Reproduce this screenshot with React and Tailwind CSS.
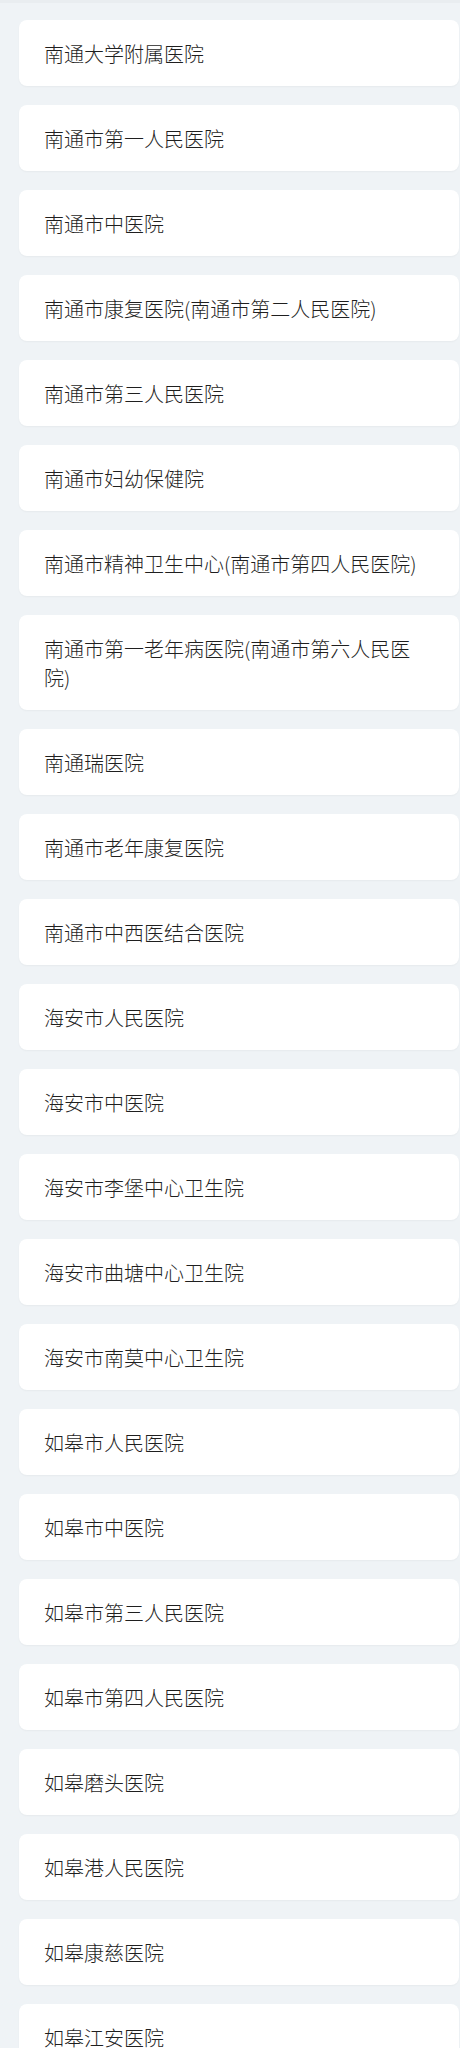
const items = [
  "南通大学附属医院",
  "南通市第一人民医院",
  "南通市中医院",
  "南通市康复医院(南通市第二人民医院)",
  "南通市第三人民医院",
  "南通市妇幼保健院",
  "南通市精神卫生中心(南通市第四人民医院)",
  "南通市第一老年病医院(南通市第六人民医院)",
  "南通瑞医院",
  "南通市老年康复医院",
  "南通市中西医结合医院",
  "海安市人民医院",
  "海安市中医院",
  "海安市李堡中心卫生院",
  "海安市曲塘中心卫生院",
  "海安市南莫中心卫生院",
  "如皋市人民医院",
  "如皋市中医院",
  "如皋市第三人民医院",
  "如皋市第四人民医院",
  "如皋磨头医院",
  "如皋港人民医院",
  "如皋康慈医院",
  "如皋江安医院",
];

export default function App() {
  return (
    <div
      className="min-h-[2048px] bg-[#eff3f6] border-t-[3px] border-[#e9edf0] pt-[17px] pl-[19px] pr-[1px]"
      style={{ fontFamily: '"Noto Sans CJK SC", "Noto Sans", sans-serif' }}
    >
      <div className="flex flex-col gap-[19px]">
        {items.map((t) => (
          <div
            key={t}
            className="bg-white rounded-[8px] shadow-[0_1px_2px_rgba(0,0,0,0.04)] pl-[25px] pr-[40px] pt-[19px] pb-[18px] text-[20px] leading-[29px] font-light text-[#1f1f1f]"
          >
            <div className="h-auto">{t}</div>
          </div>
        ))}
      </div>
    </div>
  );
}
